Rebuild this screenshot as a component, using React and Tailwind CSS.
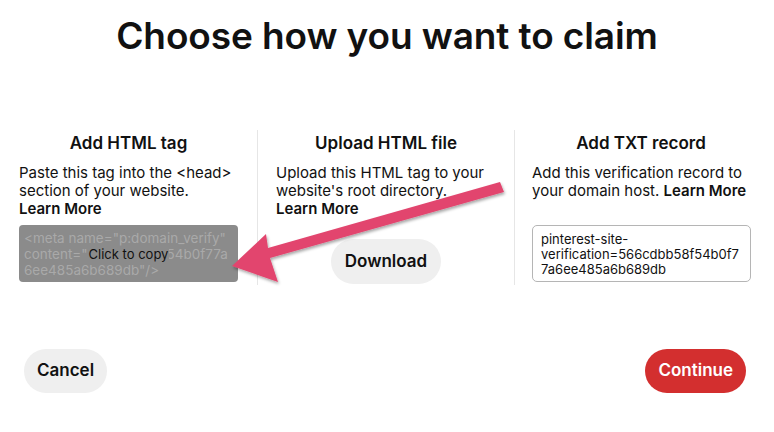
import React from "react";

export default function App() {
  const font = { fontFamily: "Inter, 'Liberation Sans', sans-serif" };
  return (
    <div className="relative w-[774px] h-[432px] bg-white text-[#111] overflow-hidden" style={font}>
      <h1 className="pt-[14px] text-center text-[37px] leading-[44px] font-semibold tracking-[-0.1px]">
        Choose how you want to claim
      </h1>
      <div className="mt-[72px] grid grid-cols-[257px_257px_260px] h-[155px]">
        <div className="px-[19px] flex flex-col">
          <h2 className="text-center text-[17px] leading-[26px] font-semibold">Add HTML tag</h2>
          <p className="mt-[8px] text-[15px] leading-[18px]">
            Paste this tag into the &lt;head&gt; section of your website.{" "}
            <b className="font-semibold whitespace-nowrap">Learn More</b>
          </p>
          <div className="relative mt-[7px] w-[219px] h-[57px] rounded-[4px] bg-[#8b8b8b] pl-[5px] pr-[4px] pt-[5px] text-[13.5px] leading-[16px] text-[#a9a9a9] break-words">
            &lt;meta name="p:domain_verify" content="566cdbb58f54b0f77a6ee485a6b689db"/&gt;
            <div className="absolute inset-0 flex items-center justify-center text-[13px] text-[#111]">
              <span className="bg-[#8b8b8b] px-[1px]">Click to copy</span>
            </div>
          </div>
        </div>
        <div className="px-[18px] border-l border-[#e6e6e6] flex flex-col">
          <h2 className="text-center text-[17px] leading-[26px] font-semibold">Upload HTML file</h2>
          <p className="mt-[8px] text-[15px] leading-[18px]">
            Upload this HTML tag to your website's root directory.{" "}
            <b className="font-semibold whitespace-nowrap">Learn More</b>
          </p>
          <div className="mt-[21px] flex justify-center">
            <button className="h-[45px] px-[14px] rounded-full bg-[#efefef] text-[17px] font-semibold">Download</button>
          </div>
        </div>
        <div className="pl-[17px] pr-[24px] border-l border-[#e6e6e6] flex flex-col">
          <h2 className="text-center text-[17px] leading-[26px] font-semibold">Add TXT record</h2>
          <p className="mt-[8px] text-[15px] leading-[18px]">
            Add this verification record to your domain host.{" "}
            <b className="font-semibold whitespace-nowrap">Learn More</b>
          </p>
          <div className="mt-[25px] w-[219px] h-[57px] rounded-[5px] border border-[#b5b5b5] px-[8px] pt-[6px] text-[13px] leading-[15px] break-all">
            pinterest-site-<br />verification=566cdbb58f54b0f77a6ee485a6b689db
          </div>
        </div>
      </div>
      <div className="mt-[64px] pl-[24px] pr-[28px] flex justify-between">
        <button className="h-[44px] px-[13px] rounded-full bg-[#efefef] text-[17px] font-semibold">Cancel</button>
        <button className="h-[44px] px-[13px] rounded-full bg-[#d32f2f] text-white text-[17px] font-semibold">Continue</button>
      </div>
      <svg className="absolute left-0 top-0 pointer-events-none" width="774" height="432" viewBox="0 0 774 432">
        <defs>
          <filter id="sh" x="-10%" y="-10%" width="120%" height="130%">
            <feDropShadow dx="1" dy="2" stdDeviation="1.5" floodColor="#000" floodOpacity="0.35" />
          </filter>
        </defs>
        <polygon
          filter="url(#sh)"
          fill="#e2456e"
          points="500,182 504,192 270,258 278,282 232,266 266,234 268,248"
        />
      </svg>
    </div>
  );
}
